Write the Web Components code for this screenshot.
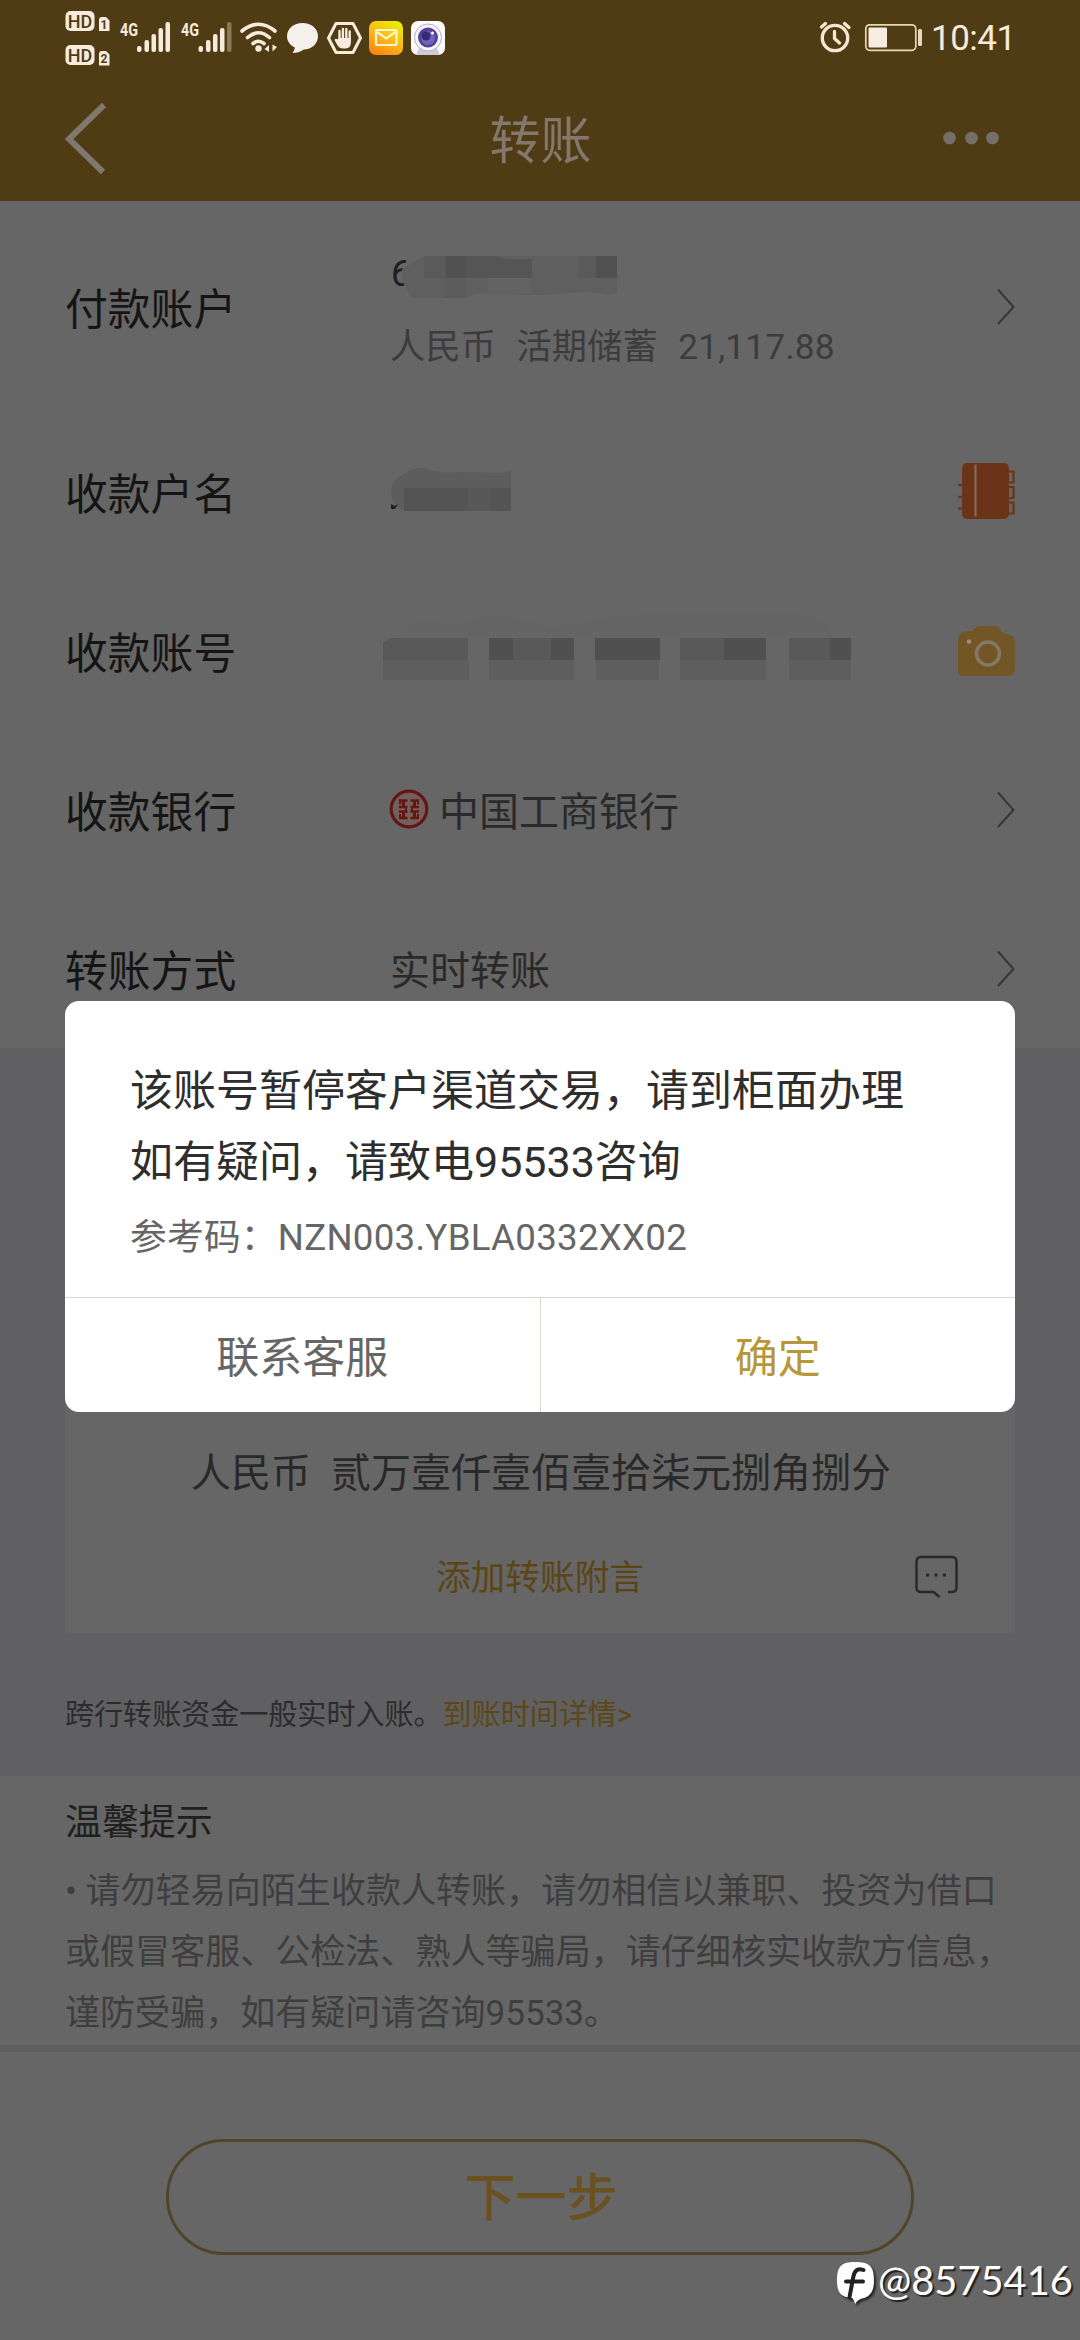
<!DOCTYPE html>
<html lang="zh-CN">
<head>
<meta charset="utf-8">
<title>转账</title>
<style>
html,body{margin:0;padding:0;background:#666666}
body{width:1080px;height:2340px;overflow:hidden;font-family:Roboto,"Noto Sans CJK SC",sans-serif}
</style>
</head>
<body>
<transfer-page></transfer-page>
<script>
const define = (name, html) => {
  const t = document.createElement('template');
  t.innerHTML = '<style>*{box-sizing:border-box}svg{display:block;flex:none}</style>' + html;
  customElements.define(name, class extends HTMLElement {
    constructor() {
      super();
      this.attachShadow({ mode: 'open' }).appendChild(t.content.cloneNode(true));
    }
  });
};

define('status-bar', `
<style>
:host{display:flex;height:74px;padding:0 69px 0 65px;align-items:flex-start;color:#f6ebdc}
.time{font-size:35px;line-height:40px;margin:19px 0 0 9px;width:80px;white-space:nowrap;letter-spacing:-.5px}
.sp{flex:1}
</style>
<svg width="46" height="74" viewBox="65 0 46 74" fill="#f6ebdc">
 <rect x="65.5" y="11" width="29" height="20" rx="5"/><rect x="65.5" y="45" width="29" height="20" rx="5"/>
 <path d="M99 20q0-3 3-3h4l3.500 3.500V31H99zM99 54q0-3 3-3h4l3.500 3.500V65.500H99z"/>
 <g fill="#4f3c14" font-family="Roboto" font-weight="500"><text x="80" y="27.500" font-size="18" text-anchor="middle">HD</text><text x="80" y="61.500" font-size="18" text-anchor="middle">HD</text>
 <text x="104" y="29" font-size="12" font-weight="700" text-anchor="middle">1</text><text x="104" y="63" font-size="12" font-weight="700" text-anchor="middle">2</text></g>
</svg>
<svg width="61" height="74" viewBox="111 0 61 74" fill="#f6ebdc">
 <text x="120" y="36" font-size="19" font-family="Roboto" font-weight="700" textLength="18" lengthAdjust="spacingAndGlyphs">4G</text>
 <rect x="137" y="46" width="4.500" height="6" rx="2"/><rect x="144.500" y="40" width="4.500" height="12" rx="2"/><rect x="151.500" y="34" width="4.500" height="18" rx="2"/><rect x="158.500" y="28" width="4.500" height="24" rx="2"/><rect x="165.500" y="22" width="4.500" height="30" rx="2"/>
</svg>
<svg width="61" height="74" viewBox="172 0 61 74" fill="#f6ebdc">
 <text x="181" y="36" font-size="19" font-family="Roboto" font-weight="700" textLength="18" lengthAdjust="spacingAndGlyphs">4G</text>
 <rect x="198.500" y="46" width="4.500" height="6" rx="2"/><rect x="206" y="40" width="4.500" height="12" rx="2"/><rect x="213" y="34" width="4.500" height="18" rx="2"/><rect x="220" y="28" width="4.500" height="24" rx="2"/><rect x="227" y="22" width="4.500" height="30" rx="2" fill="#8a7a55"/>
</svg>
<svg width="50" height="74" viewBox="233 0 50 74" fill="none" stroke="#f6ebdc" stroke-width="3.600" stroke-linecap="round">
 <path d="M242 31Q258.500 17.500 275 31M247.500 37.500Q258.500 28 269.500 37.500M253 43.500Q258.500 39 264 43.500"/>
 <circle cx="258.500" cy="48.500" r="3.200" fill="#f6ebdc" stroke="none"/>
 <path d="M264.500 49l4.500-4v7M277 47l-4.500 4.500V44.500" stroke="none" fill="#f6ebdc"/>
</svg>
<svg width="40" height="74" viewBox="283 0 40 74"><path d="M302.500 23c9 0 15.500 5.600 15.500 13.200S311.500 49.500 304 49.500q-5.500 3.500-11.500 3.500q2.300-2.500 2.300-5.500C290 45 287 41 287 36.200 287 28.600 293.500 23 302.500 23z" fill="#f6f0ea"/></svg>
<svg width="42" height="74" viewBox="323 0 42 74">
 <path d="M336 23.500h17l7.500 14.500-7.500 14.500h-17L328.500 38z" fill="none" stroke="#f6ebdc" stroke-width="3" stroke-linejoin="round"/>
 <path d="M339.500 31v10M342.900 29v10M346.300 29v10M349.700 31.500v9" stroke="#f6ebdc" stroke-width="2.400" stroke-linecap="round"/>
 <path d="M338.300 38h12.600v4q0 6.500-5.400 6.500h-2.500q-4 0-6-4l-2.500-4.500q1-2 3-.5z" fill="#f6ebdc"/>
</svg>
<svg width="42" height="74" viewBox="365 0 42 74">
 <defs><linearGradient id="m" x1=".8" y1="0" x2=".2" y2="1"><stop offset="0" stop-color="#e9f000"/><stop offset=".5" stop-color="#fbb81a"/><stop offset="1" stop-color="#ff8410"/></linearGradient></defs>
 <rect x="369" y="21" width="34" height="34" rx="7" fill="url(#m)"/>
 <rect x="376" y="30" width="20.500" height="15" rx="1" fill="none" stroke="#fff6c8" stroke-width="2.200"/><path d="M377 32l9.200 6.500L395.500 32" fill="none" stroke="#fff6c8" stroke-width="2.200"/>
</svg>
<svg width="42" height="74" viewBox="407 0 42 74">
 <rect x="411" y="21" width="34" height="34" rx="7" fill="#fbfafc"/><path d="M419 48l-3 7h24l-3-7z" fill="#cfccd8"/>
 <circle cx="428" cy="37.500" r="13.500" fill="#f8f6fb" stroke="#b5afc9" stroke-width="1"/><circle cx="428" cy="37.500" r="10" fill="#514296"/><circle cx="428" cy="38" r="7" fill="#7163ba"/><circle cx="426" cy="36" r="4.500" fill="#352a74"/><circle cx="432.500" cy="33" r="1.500" fill="#fff"/>
</svg>
<span class="sp"></span>
<svg width="36" height="74" viewBox="816 0 36 74" fill="none" stroke="#f9e6d3" stroke-width="3.300" stroke-linecap="round" stroke-linejoin="round"><circle cx="834" cy="38" r="12.700"/><path d="M833.500 31.500v7l5 4.500M820.500 27l4-3.500M843.500 23.500l4.500 4"/></svg>
<svg width="62" height="74" viewBox="859 0 62 74" style="margin-left:7px"><rect x="864.800" y="24.800" width="50" height="25.500" rx="4" fill="none" stroke="#e8d8ae" stroke-width="1.700"/><rect x="867.500" y="27.500" width="18.500" height="20" rx="1" fill="#f7ece1"/><rect x="917" y="29" width="4" height="17" rx="1.500" fill="#e8d8c0"/></svg>
<span class="time">10:41</span>
`);

define('nav-header', `
<style>
:host{display:flex;height:127px;padding:0 80px 0 65px;align-items:flex-start;justify-content:space-between;color:#84776b}
.t{font-size:51px;line-height:60px;margin:38px 0 0 16px}
.side{width:60px}
</style>
<svg class="side" width="60" height="127" viewBox="65 74 60 127" fill="none" stroke="#80776e" stroke-width="6"><path d="M104 105L69 139l34 33"/></svg>
<div class="t"><slot></slot></div>
<svg class="side" width="60" height="127" viewBox="939 74 60 127" fill="#766e68"><circle cx="948.500" cy="138" r="6.300"/><circle cx="970.500" cy="138" r="6.300"/><circle cx="991.500" cy="138" r="6.300"/></svg>
`);

define('form-row', `
<style>
:host{display:flex;height:159px;padding:0 64px 0 65px;align-items:center}
:host([tall]){height:211px}
.l{width:325px;padding-top:6px;font-size:42.800px;line-height:60px;color:#151515}
.v{flex:1;font-size:40px;line-height:56px;color:#2a2a2a;display:flex;align-items:center}
.v>slot{display:flex;align-items:center}
</style>
<div class="l"><slot name="label"></slot></div><div class="v"><slot></slot></div><slot name="end"></slot>
`);

define('row-text', `<style>:host{display:block;padding-top:6px}</style><slot></slot>`);

define('chevron-icon', `
<style>:host{display:block}</style>
<svg width="20" height="40" viewBox="0 0 20 40" fill="none" stroke="#363636" stroke-width="2"><path d="M2 2.500l15.500 17.500L2 37"/></svg>`);

define('book-icon', `
<style>:host{display:block;margin-bottom:2px}</style>
<svg width="58" height="60" viewBox="957 460 58 60"><rect x="961" y="462" width="47" height="56" rx="5" fill="#6b3418"/><path d="M974.500 463.500v52" stroke="#85695c" stroke-width="2.200"/>
<path d="M1008 470.500h4.500v11H1008M1008 486h4.500v11H1008M1008 501.500h4.500v11H1008" fill="none" stroke="#6b3418" stroke-width="2.200"/><path d="M957 484h4M957 496h4M957 507.500h4" stroke="#54413a" stroke-width="2.400"/></svg>`);

define('camera-icon', `
<style>:host{display:block;padding-top:1px}</style>
<svg width="58" height="50" viewBox="957 626 58 50"><path d="M972 631q2-5 7-5h14q5 0 7 5l3 2.500q11 1 11 8V667q0 9-7 9H962q-5 0-5-5v-31q0-8 10-9z" fill="#735626"/><ellipse cx="987" cy="653.500" rx="11.500" ry="11.500" fill="none" stroke="#857869" stroke-width="3.500"/><circle cx="968" cy="641.500" r="2.300" fill="#9a8c7b"/></svg>`);

define('payer-account', `
<style>
:host{display:flex;flex-direction:column;width:520px;height:124px}
.n{font-size:36px;line-height:46px;height:54px;margin-top:6px;color:#202020;display:flex}
.n span{width:17px;overflow:visible;margin-left:1px}
.n svg{position:relative;left:-8px;top:3px}
.s{font-size:35.200px;line-height:44px;color:#3c3c3c;white-space:pre;margin-top:20px;word-spacing:1.200px;letter-spacing:.2px}
</style>
<div class="n"><span>6</span><svg width="220" height="44" viewBox="400 253 220 44">
<path d="M402 268L424 255H617V292L608 294 590 291 570 292 540 294 515 294 480 292 465 297H412L402 280z" fill="#5f5f5f"/>
<path d="M424 255h22v22h-22zM513 258h18v19h-18zM579 255h17v22h-17z" fill="#5a5a5a"/><path d="M446 255h20v22h-20zM596 255h21v22h-21z" fill="#515151"/><path d="M466 255h30l10 3h26v19h-66z" fill="#555"/><path d="M513 277h20v17h-20zM444 277h23v20h-23z" fill="#5c5c5c"/><path d="M487 277h45v16l-45 1z" fill="#626262"/></svg></div>
<div class="s"><slot></slot></div>
`);

define('masked-name', `
<style>:host{display:block;width:130px;height:44px;margin-bottom:5px}</style>
<svg width="122" height="44" viewBox="390 467 122 44"><path d="M391 493q0-14 13-19 14-10 26-4 14 4 30 2l40 1 11-2v39H402q-9-4-11-17z" fill="#5d5d5d"/><path d="M404 488h107v23H404z" fill="#545454"/><path d="M468 488h22v23h-22z" fill="#585858"/><path d="M391 504l4 2 3-2-3 5h-4z" fill="#222"/></svg>`);

define('masked-number', `
<style>:host{display:block;width:470px;height:68px;margin:0 0 6px -7px}</style>
<svg width="470" height="68" viewBox="383 614 470 68">
<path d="M400 638q22-28 46-10l22-8 35-4 50 12 40-8 60-6h120q50-4 62 24z" fill="#636363" opacity=".5"/>
<path d="M383 642l8-4h77v22H383zM789 638h41v22h-41z" fill="#595959"/><path d="M512 638h39v22h-39zM680 638h44v22h-44z" fill="#595959"/><path d="M489 638h24v22h-24zM551 638h23v22h-23zM595 638h65v22h-65zM724 638h42v22h-42zM830 638h21v22h-21z" fill="#505050"/>
<path d="M383 660h86v20h-86zM489 660h85v20h-85zM596 660h63v20h-63zM680 660h86v20h-86zM789 660h62v20h-62z" fill="#5e5e5e"/></svg>`);

define('icbc-logo', `
<style>:host{display:block;margin:0 10px 2px -1px}</style>
<svg width="40" height="40" viewBox="0 0 40 40" fill="none" stroke="#641616"><circle cx="20" cy="20" r="17.800" fill="#71605c" stroke-width="3.200"/>
<path d="M10 11.500h8.500M10 18h8.500M10 22.500h8.500M10 29h8.500M30 11.500h-8.500M30 18h-8.500M30 22.500h-8.500M30 29h-8.500" stroke-width="2.600"/><path d="M14.500 12v6M14.500 23v6M25.500 12v6M25.500 23v6" stroke-width="3"/><path d="M11 10.500v5M11 25v5M29 10.500v5M29 25v5M17 17v7M23 17v7" stroke-width="2"/></svg>`);

define('amount-card', `
<style>
:host{display:flex;flex-direction:column;justify-content:flex-end;width:950px;height:525px;margin:60px 65px 0;background:#666666}
.a{font-size:40px;line-height:60px;text-align:center;white-space:pre;color:#292929;padding:2px 0 0 2px}
.r{display:flex;align-items:center;justify-content:space-between;height:60px;margin:44px 57px 25px 57px;color:#5b4515;font-size:34.700px;line-height:60px}
.r i{width:44px}
.r svg{margin-bottom:2px}
</style>
<div class="a"><slot></slot></div>
<div class="r"><i></i><slot name="note"></slot>
<svg width="44" height="46" viewBox="913 1553 44 46" fill="none" stroke="#292929" stroke-width="2.400" stroke-linejoin="round"><path d="M932 1591h-12q-4.500 0-4.500-4.500V1561q0-5 4.500-5h31q4.500 0 4.500 5v25.500q0 4.500-4.500 4.500h-4M932 1590.500l6.500 5.500"/><path d="M925 1574h3M933.500 1574h3M942 1574h3" stroke-width="3"/></svg></div>
`);

define('arrival-note', `
<style>:host{display:block;height:143px;padding:54px 0 0 65px;font-size:29.050px;line-height:56px;color:#2c2c2e}
::slotted(a){color:#5c4717}</style><slot></slot>`);

define('warm-tips', `
<style>
:host{display:block;height:276px;padding:21px 0 0 65px;background:#666666;border-bottom:7px solid #5f5f5f}
h2{margin:0;font-size:36.900px;line-height:52px;font-weight:400;color:#202020}
.p{font-size:35.050px;line-height:61px;margin-top:12px;color:#3e3e3e;white-space:pre}
</style>
<h2><slot name="title"></slot></h2><div class="p"><slot></slot></div>`);

define('next-button', `
<style>:host{display:flex;align-items:center;justify-content:center;width:748px;height:116px;margin:87px 0 0 166px;padding:4px 0 0 2px;box-sizing:border-box;border:3px solid #50452a;border-radius:58px;font-size:51px;font-weight:500;line-height:60px;color:#6b5020}</style><slot></slot>`);

define('confirm-dialog', `
<style>
:host{position:absolute;left:65px;top:1001px;width:950px;height:411px;display:flex;flex-direction:column;background:#fff;border-radius:14px;overflow:hidden}
.m{height:296px;padding:55px 0 0 65px;font-size:43px;line-height:71px;color:#2e2e2e;white-space:pre-line}
.c{font-size:36.700px;line-height:50px;margin-top:15px;color:#666;letter-spacing:.25px}
.f{display:flex;flex:1;border-top:1px solid #d9d4c9}
.f div{flex:1;display:flex;align-items:center;justify-content:center;padding-top:6px;font-size:43px;line-height:60px;color:#666}
.f div+div{border-left:1px solid #ddd8cf;color:#b7973a}
</style>
<div class="m"><slot></slot><div class="c"><slot name="code"></slot></div></div>
<div class="f"><div><slot name="cancel"></slot></div><div><slot name="ok"></slot></div></div>
`);

define('user-watermark', `
<style>:host{position:absolute;left:835px;top:2255px;display:flex;align-items:center;color:#fff;font:400 39.800px/50px Lato,sans-serif;text-shadow:2px 2px 1px #222}
svg{filter:drop-shadow(2px 2px 1px #222)}span{margin-left:2px}</style>
<svg width="41" height="48" viewBox="834 2256 41 48"><path d="M854 2262c14 0 19 4 19 18 0 12-4 16-10 18q-6 1-9 6-1-5-3-6c-12-1-15-6-15-18 0-14 5-18 18-18z" fill="#fff"/><path d="M862.500 2270q-8-3-10 6l-4 21M845 2281.500h17" fill="none" stroke="#222" stroke-width="4" stroke-linecap="round"/></svg>
<span><slot></slot></span>`);

define('transfer-page', `
<style>
:host{display:flex;flex-direction:column;position:relative;width:1080px;height:2340px;background:#666666;overflow:hidden}
.top{background:#503c14}
.mid{background:#606062;height:728px;display:flow-root}
form-row,.mid,warm-tips,next-button,.top{flex:none}
</style>
<div class="top"><status-bar></status-bar><nav-header>转账</nav-header></div>
<form-row tall><span slot="label">付款账户</span><payer-account>人民币  活期储蓄  21,117.88</payer-account><chevron-icon slot="end"></chevron-icon></form-row>
<form-row><span slot="label">收款户名</span><masked-name></masked-name><book-icon slot="end"></book-icon></form-row>
<form-row><span slot="label">收款账号</span><masked-number></masked-number><camera-icon slot="end"></camera-icon></form-row>
<form-row><span slot="label">收款银行</span><icbc-logo></icbc-logo><row-text>中国工商银行</row-text><chevron-icon slot="end"></chevron-icon></form-row>
<form-row><span slot="label">转账方式</span><row-text>实时转账</row-text><chevron-icon slot="end"></chevron-icon></form-row>
<div class="mid"><amount-card>人民币  贰万壹仟壹佰壹拾柒元捌角捌分<span slot="note">添加转账附言</span></amount-card>
<arrival-note>跨行转账资金一般实时入账。<a>到账时间详情&gt;</a></arrival-note></div>
<warm-tips><span slot="title">温馨提示</span>• 请勿轻易向陌生收款人转账，请勿相信以兼职、投资为借口
或假冒客服、公检法、熟人等骗局，请仔细核实收款方信息，
谨防受骗，如有疑问请咨询95533。</warm-tips>
<next-button>下一步</next-button>
<confirm-dialog>该账号暂停客户渠道交易，请到柜面办理
如有疑问，请致电95533咨询<span slot="code">参考码：NZN003.YBLA0332XX02</span><span slot="cancel">联系客服</span><span slot="ok">确定</span></confirm-dialog>
<user-watermark>@8575416</user-watermark>
`);
</script>
</body>
</html>
